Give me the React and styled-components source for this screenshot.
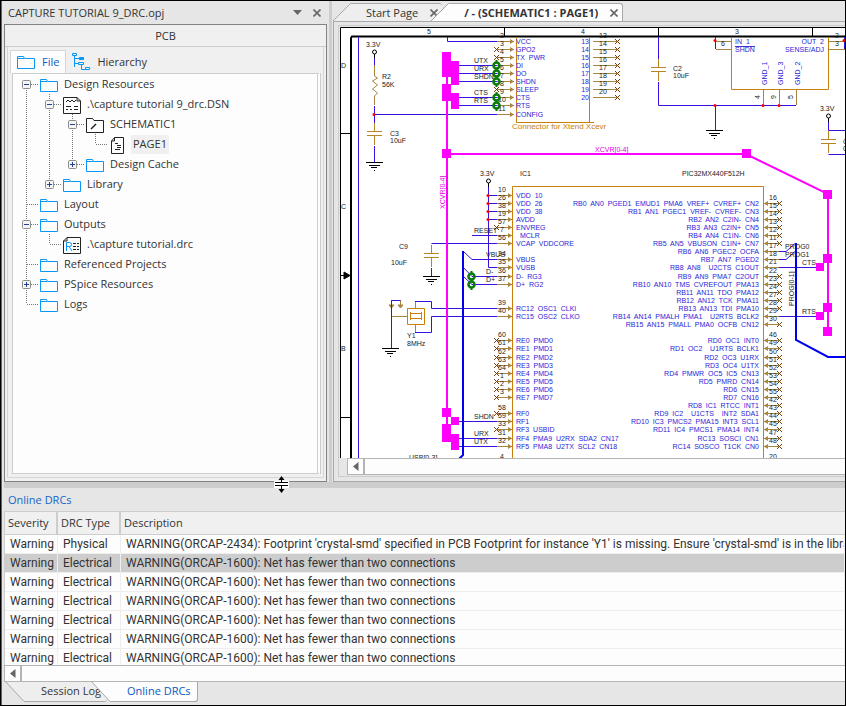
import React from 'react'
import styled, { createGlobalStyle } from 'styled-components';


const GlobalStyle = createGlobalStyle`
    * {
        box-sizing: border-box;
    }
    body {
        margin: 0;
        font-family: "Open Sans", "Noto Sans", sans-serif;
        font-size: 11px;
        line-height: 18px;
        color: #333;
    }
    button {
        font: inherit;
        color: inherit;
        background: none;
        border: 0;
        padding: 0;
        display: flex;
        align-items: center;
        justify-content: center;
    }
    svg {
        display: block;
        flex: none;
    }
`;

const Window = styled.div`
    height: 100vh;
    display: flex;
    flex-direction: column;
    background-color: #e6e6e6;
    border: 1px solid #000;
    padding-left: 3px;
    box-shadow: inset 1px 0 0 #2a6fd0;
    overflow: hidden;
`;

const Workspace = styled.div`
    flex: 1;
    min-height: 0;
    display: flex;
`;

const SplitterV = styled.div`
    width: 6px;
    background-color: #cdcdcd;
    border-left: 2px solid #e6e6e6;
    border-right: 1px solid #e6e6e6;
`;

const SplitterH = styled.div`
    position: relative;
    height: 6px;
    flex: none;
    background-color: #cdcdcd;
`;

const ResizeCursor = styled.svg`
    position: absolute;
    left: 270px;
    top: -6px;
    z-index: 2;
`;

const ProjectPanel = styled.section`
    width: 323px;
    display: flex;
    flex-direction: column;
`;

const PanelHeader = styled.header`
    height: 23px;
    display: flex;
    align-items: center;
    padding: 0 2px 0 4px;
    gap: 4px;
    h1 {
        flex: 1;
        margin: 0;
        font-size: 11px;
        font-weight: normal;
    }
    button {
        width: 16px;
        height: 16px;
    }
`;

const PanelBody = styled.div`
    flex: 1;
    min-height: 0;
    display: flex;
    flex-direction: column;
    border: 1px solid #828282;
    background-color: #f0f0f0;
`;

const PanelTitle = styled.div`
    height: 22px;
    line-height: 22px;
    text-align: center;
    border-bottom: 1px solid #cdcdcd;
`;

const TreeFrame = styled.div`
    flex: 1;
    min-height: 0;
    display: flex;
    flex-direction: column;
    margin: 0 2px 3px 2px;
    padding: 3px 2px 3px 2px;
    border: 1px solid #d6d6d6;
    border-top: 0;
`;

const ViewTabs = styled.div`
    display: flex;
    height: 23px;
`;

const ViewTab = styled.button`
    gap: 7px;
    padding: 0 6px;
    color: ${(props) => (props.$active ? '#0a5ac2' : '#333')};
    background-color: ${(props) => (props.$active ? '#fdfdfd' : 'transparent')};
    border: ${(props) => (props.$active ? '1px solid #d6d6d6' : '0')};
    border-bottom: 0;
`;

const Tree = styled.div`
    flex: 1;
    min-height: 0;
    overflow: hidden;
    padding-left: 2px;
    margin-left: 2px;
    background-color: #fdfdfd;
    border: 1px solid #cdcdcd;
    border-right: 4px double #cdcdcd;
`;

const TreeRow = styled.div`
    display: flex;
    align-items: center;
    height: 20px;
    .icon {
        margin: 2px 4px 0 2px;
    }
`;

const TreeLabel = styled.span`
    padding: 0 2px 1px 2px;
    line-height: 18px;
    background-color: ${(props) => (props.$selected ? '#f0f0f0' : 'transparent')};
`;

const Editor = styled.section`
    flex: 1;
    min-width: 0;
    display: flex;
    flex-direction: column;
`;

const DocTabs = styled.div`
    display: flex;
    height: 20px;
    padding-top: 2px;
`;

const DocTab = styled.div`
    display: flex;
    height: 18px;
    margin-left: ${(props) => (props.$active ? '-11px' : '0')};
    font-weight: ${(props) => (props.$active ? 'bold' : 'normal')};
    .body {
        display: flex;
        align-items: center;
        gap: 12px;
        padding: 0 4px 0 15px;
        border-top: 1px solid #a8a8a8;
        border-right: ${(props) => (props.$active ? '1px solid #a8a8a8' : '0')};
        border-radius: 0 3px 0 0;
        background-color: ${(props) => (props.$active ? '#fdfdfd' : '#eee')};
    }
`;

const EditorFrame = styled.div`
    flex: 1;
    min-height: 0;
    display: flex;
    padding: 3px 0 4px 4px;
    border: 1px solid #a8a8a8;
    border-right: 0;
`;

const EditorView = styled.div`
    flex: 1;
    min-width: 0;
    display: flex;
    flex-direction: column;
    padding: 1px 0 1px 1px;
    border: 1px solid #cdcdcd;
    border-right: 0;
`;

const Sheet = styled.svg`
    flex: 1;
    min-height: 0;
    width: 100%;
    background-color: #fff;
    fill: none;
    text {
        font-family: "Liberation Sans", Arial, sans-serif;
        font-size: 7px;
        white-space: pre;
        fill: #222;
    }
    .pin {
        fill: #2a24d8;
    }
    .net {
        fill: #e600e6;
    }
    .caption {
        font-size: 8px;
        fill: #c8800a;
    }
    .end {
        text-anchor: end;
    }
    .mid {
        text-anchor: middle;
    }
`;

const ScrollBar = styled.div`
    display: flex;
    height: 17px;
    flex: none;
    margin-left: ${(props) => (props.$inset ? '7px' : '0')};
    background-color: #fdfdfd;
    border: 1px solid #b4b4b4;
    border-right: 0;
    button {
        width: 17px;
        border-right: 2px solid #b4b4b4;
    }
`;

const Dock = styled.section`
    flex: none;
    h2 {
        margin: 0;
        padding: 0 4px;
        font-size: 11px;
        font-weight: normal;
        line-height: 23px;
        color: #1565c8;
    }
`;

const TableView = styled.div`
    height: 154px;
    overflow: hidden;
    background-color: #fdfdfd;
    border-left: 1px solid #cdcdcd;
`;

const DrcTable = styled.table`
    width: 100%;
    table-layout: fixed;
    border-collapse: separate;
    border-spacing: 0;
    white-space: nowrap;
    th {
        height: 24px;
        padding: 0 3px;
        text-align: left;
        font-weight: normal;
        background-color: #f0f0f0;
        border-top: 1px solid #cdcdcd;
        border-bottom: 1px solid #cdcdcd;
        border-right: 2px solid #cdcdcd;
    }
    th:last-child {
        border-right: 0;
    }
    td {
        height: 19px;
        padding: 1px 5px 0 5px;
        font-family: Roboto, "Open Sans", sans-serif;
        font-size: 12px;
        line-height: 17px;
        overflow: hidden;
        border-bottom: 1px solid #eee;
        border-right: 1px solid #eee;
    }
    .severity {
        width: 53px;
    }
    .type {
        width: 63px;
    }
`;

const DrcRow = styled.tr`
    background-color: ${(props) => (props.$selected ? '#cdcdcd' : 'transparent')};
`;

const DockTabs = styled.div`
    display: flex;
    height: 23px;
    padding-left: 1px;
`;

const DockTab = styled.button`
    height: 20px;
    margin-left: ${(props) => (props.$active ? '-16px' : '0')};
    color: ${(props) => (props.$active ? '#0a5ac2' : '#333')};
    span {
        height: 20px;
        padding: 0 6px 0 16px;
        border-bottom: 1px solid #a8a8a8;
        border-right: ${(props) => (props.$active ? '1px solid #a8a8a8' : '0')};
        border-radius: 0 0 3px 0;
        background-color: ${(props) => (props.$active ? '#fdfdfd' : '#eee')};
    }
`;

const Folder = () => (
    <svg className="icon" width="18" height="14" fill="none" stroke="#0a96f5">
        <path d="M.5 1.5H6.5L7.5 3.5H17.5V13.5H.5ZM.5 3.5H7" />
    </svg>
)

const icons = {
    folder: <Folder />,
    design: (
        <svg className="icon" width="18" height="17" fill="none" stroke="#222">
            <path d="M.5 .5H14L17.5 4V16.5H.5ZM14 .5V4H17.5" />
            <path d="M3 5l2-2 2 2 2-2 2 2 2-2M3 9.5h5M11 9.5h4M3 12.5h2M7 12.5h2M11 12.5h4" />
        </svg>
    ),
    schematic: (
        <svg className="icon" width="18" height="15" fill="none" stroke="#222">
            <path d="M.5 .5H6.5L8 2.5H17.5V14.5H.5Z" />
            <path d="M5 11l5-5" strokeWidth="1.4" />
        </svg>
    ),
    page: (
        <svg className="icon" width="18" height="17" fill="none" stroke="#222">
            <path d="M5.5 .5H14.5V16.5H2.5V4Z M5.5 .5V4H2.5" />
            <path d="M6 6.5h3M8 8.5h4M8 10.5h4M6 12.5h5" />
        </svg>
    ),
    report: (
        <svg className="icon" width="18" height="17" fill="none" stroke="#222">
            <path d="M4 .5H17.5V16.5H.5V4ZM4 .5V4H.5" />
            <path d="M10 6.5h6M10 9.5h6M10 12.5h6" strokeDasharray="3 1" />
            <path d="M3.5 14V5.5H6.5Q8.5 5.5 8.5 7.5T6.5 9.5H3.5M6 9.5L9 14" stroke="#0a96f5" />
        </svg>
    ),
}

const HierarchyIcon = () => (
    <svg width="18" height="19" fill="none" stroke="#0a96f5">
        <path d="M.5 1.5h4v2h-4zM2.5 4V15M2.5 6.5h5M2.5 11.5h4M9.5 13V17.5h4" />
        <path d="M7.5 5.5h4v2h-4zM6.5 10.5h5v2h-5zM13.5 15.5h4v2h-4z" />
        <path d="M7 6.5h5" strokeWidth="2" />
    </svg>
)

const Cross = ({ size = 8 }) => (
    <svg width={size} height={size} viewBox="0 0 8 8" stroke="#666" strokeWidth="1.6">
        <path d="M.5 .5l7 7M7.5 .5l-7 7" />
    </svg>
)

const LeftTriangle = () => (
    <svg width="6" height="9" fill="#666"><path d="M5.5 0V9L0 4.5Z" /></svg>
)

// cells: one letter per indent column
// '|' line, 't' branch, 'l' last branch, '^' first open box
// '-' open box, '+' closed box, '*' closed box that ends its column
const treeItems = [
    { cells: '^', icon: 'folder', label: 'Design Resources' },
    { cells: '|-', icon: 'design', label: '.\\capture tutorial 9_drc.DSN' },
    { cells: '||-', icon: 'schematic', label: 'SCHEMATIC1' },
    { cells: '|||l', icon: 'page', label: 'PAGE1', selected: true },
    { cells: '||*', icon: 'folder', label: 'Design Cache' },
    { cells: '|*', icon: 'folder', label: 'Library' },
    { cells: 't', icon: 'folder', label: 'Layout' },
    { cells: '-', icon: 'folder', label: 'Outputs' },
    { cells: '|l', icon: 'report', label: '.\\capture tutorial.drc' },
    { cells: 't', icon: 'folder', label: 'Referenced Projects' },
    { cells: '+', icon: 'folder', label: 'PSpice Resources' },
    { cells: 'l', icon: 'folder', label: 'Logs' },
]

const TreeCell = ({ kind, label }) => {
    const up = kind !== '^';
    const down = '|t-+^'.includes(kind);
    const across = kind !== '|';
    const box = '-+*^'.includes(kind);
    const closed = kind === '+' || kind === '*';
    const drawing = (
        <svg width="23" height="20" overflow="visible" fill="none" stroke="#777">
            <path
                strokeDasharray="1 1"
                d={`${up ? 'M11.5 0V10' : ''}${down ? 'M11.5 10V20' : ''}${across ? 'M12 10.5H24' : ''}`}
            />
            {box && <rect x="7.5" y="6.5" width="8" height="8" rx="1" fill="#f4f4f4" stroke="#8c8c8c" />}
            {box && <path d={`M9 10.5h5${closed ? 'M11.5 8v5' : ''}`} stroke="#24408e" />}
        </svg>
    )
    return box ? <button type="button" aria-label={`Toggle ${label}`}>{drawing}</button> : drawing
}

const leftPins = [
    [195, '10', 'VDD  10'], [203, '26', 'VDD  26'], [211, '38', 'VDD  38'], [219, '19', 'AVDD'],
    [227, '57', 'ENVREG', 'x'], [235, '7', '  MCLR'], [243, '56', 'VCAP  VDDCORE'],
    [259, '34', 'VBUS'], [267, '35', 'VUSB'], [276, '36', 'D-  RG3'], [284, '37', 'D+  RG2'],
    [308, '39', 'RC12  OSC1  CLKI'], [316, '40', 'RC15  OSC2  CLKO'],
    [340, '60', 'RE0  PMD0', 'x'], [348, '61', 'RE1  PMD1', 'x'], [357, '62', 'RE2  PMD2', 'x'],
    [365, '63', 'RE3  PMD3', 'x'], [373, '64', 'RE4  PMD4', 'x'], [381, '1', 'RE5  PMD5', 'x'],
    [389, '2', 'RE6  PMD6', 'x'], [397, '3', 'RE7  PMD7', 'x'],
    [413, '58', 'RF0', 'x'], [421, '59', 'RF1'], [429, '33', 'RF3  USBID', 'x'],
    [438, '31', 'RF4  PMA9  U2RX  SDA2  CN17'], [446, '32', 'RF5  PMA8  U2TX  SCL2  CN18'],
    [462, '4', ''],
]

const rightPins = [
    [203, '16', 'RB0  AN0  PGED1  EMUD1  PMA6  VREF+  CVREF+  CN2', 'x'],
    [211, '15', 'RB1  AN1  PGEC1  VREF-  CVREF-  CN3', 'x'],
    [219, '14', 'RB2  AN2  C2IN-  CN4', 'x'],
    [227, '13', 'RB3  AN3  C2IN+  CN5', 'x'],
    [235, '12', 'RB4  AN4  C1IN-  CN6', 'x'],
    [243, '11', 'RB5  AN5  VBUSON  C1IN+  CN7', 'x'],
    [251, '17', 'RB6  AN6  PGEC2  OCFA'],
    [259, '18', 'RB7  AN7  PGED2'],
    [267, '21', 'RB8  AN8    U2CTS  C1OUT'],
    [276, '22', 'RB9  AN9  PMA7  C2OUT', 'x'],
    [284, '23', 'RB10  AN10  TMS  CVREFOUT  PMA13', 'x'],
    [292, '24', 'RB11  AN11  TDO  PMA12', 'x'],
    [300, '27', 'RB12  AN12  TCK  PMA11', 'x'],
    [308, '28', 'RB13  AN13  TDI  PMA10', 'x'],
    [316, '29', 'RB14  AN14  PMALH  PMA1    U2RTS  BCLK2'],
    [324, '30', 'RB15  AN15  PMALL  PMA0  OCFB  CN12', 'x'],
    [340, '46', 'RD0  OC1  INT0', 'x'],
    [348, '49', 'RD1  OC2    U1RTS  BCLK1', 'x'],
    [357, '50', 'RD2  OC3  U1RX', 'x'],
    [365, '51', 'RD3  OC4  U1TX', 'x'],
    [373, '52', 'RD4  PMWR  OC5  IC5  CN13', 'x'],
    [381, '53', 'RD5  PMRD  CN14', 'x'],
    [389, '54', 'RD6  CN15', 'x'],
    [397, '55', 'RD7  CN16', 'x'],
    [405, '42', 'RD8  IC1  RTCC  INT1', 'x'],
    [413, '43', 'RD9  IC2    U1CTS    INT2  SDA1', 'x'],
    [421, '44', 'RD10  IC3  PMCS2  PMA15  INT3  SCL1', 'x'],
    [429, '45', 'RD11  IC4  PMCS1  PMA14  INT4', 'x'],
    [438, '47', 'RC13  SOSCI  CN1', 'x'],
    [446, '48', 'RC14  SOSCO  T1CK  CN0', 'x'],
    [462, '20', ''],
]

const radioPins = [
    [41, '2', 'VCC'], [49, '3', 'GPO2', 'x'], [57, '4', 'TX  PWR', 'x'], [65, '5', 'DI'], [73, '6', 'DO'],
    [81, '7', 'SHDN'], [89, '8', 'SLEEP', 'x'], [97, '9', 'CTS'], [105, '10', 'RTS'], [114, '11', 'CONFIG'],
]

const netLabels = [
    [474, 63, 'UTX'], [474, 71, 'URX'], [474, 79, 'SHDN'], [474, 95, 'CTS'], [474, 103, 'RTS'],
    [474, 233, 'RESET'], [486, 257, 'VBUS'], [486, 274, 'D-'], [486, 282, 'D+'],
    [474, 419, 'SHDN'], [474, 436, 'URX'], [474, 444, 'UTX'],
    [785, 249, 'PROG0'], [785, 257, 'PROG1'], [802, 265, 'CTS'], [802, 314, 'RTS'],
    [366, 47, '3.3V'], [382, 79, 'R2'], [382, 87, '56K'], [390, 136, 'C3'], [390, 143, '10uF'],
    [673, 71, 'C2'], [673, 78, '10uF'], [820, 111, '3.3V'], [843, 144, 'C'], [843, 151, '0'],
    [480, 176, '3.3V'], [520, 176, 'IC1'], [682, 176, 'PIC32MX440F512H'],
    [399, 249, 'C9'], [391, 265, '10uF'], [407, 338, 'Y1'], [407, 346, '8MHz'], [409, 460, 'USB[0-3]'],
    [427, 34, '5'], [581, 34, '4'], [735, 34, '3'], [341, 68, 'D'], [341, 209, 'C'], [341, 351, 'B'],
    [721, 46, '6'], [835, 38, '2'], [835, 46, '3'],
]

const buses = [
    [442, 52, 9, 25], [451, 61, 8, 24], [442, 84, 9, 17], [451, 93, 8, 16], [442, 149, 9, 9],
    [442, 408, 9, 9], [451, 417, 8, 8], [442, 424, 9, 18], [451, 434, 8, 16],
    [742, 149, 9, 9], [823, 190, 9, 9], [823, 254, 9, 9], [816, 263, 8, 8],
    [823, 303, 9, 9], [816, 312, 8, 8], [823, 327, 9, 9],
]

const junctions = [
    [374, 114], [488, 195], [488, 203], [488, 211], [488, 219],
    [715, 40], [715, 105], [763, 105], [779, 105], [844, 40],
]

const NoConnect = ({ x, y }) => <path d={`M${x - 2} ${y - 2}l5 5m0 -5l-5 5`} stroke="#7a4008" />

const LeftPin = ({ x, y, num, name, nc }) => (
    <g>
        <path d={`M497 ${y}.5H${x}`} stroke="#a88440" />
        <path d={`M${x - 4} ${y - 2}l4 2.5l-4 2.5z`} fill="#a88440" />
        {nc && <NoConnect x={496} y={y} />}
        <text className="mid" x="502" y={y - 3}>{num}</text>
        <text className="pin" x="516" y={y + 3}>{name}</text>
    </g>
)

const RightPin = ({ y, num, name, nc }) => (
    <g>
        <path d={`M764 ${y}.5H779`} stroke="#a88440" />
        <path d={`M768 ${y - 2}l-4 2.5l4 2.5z`} fill="#a88440" />
        {nc && <NoConnect x={779} y={y} />}
        <text className="mid" x="773" y={y - 3}>{num}</text>
        <text className="pin end" x="759" y={y + 3}>{name}</text>
    </g>
)

const Ground = ({ x, y }) => (
    <path d={`M${x - 8} ${y}.5h17M${x - 5} ${y + 3}.5h11M${x - 3} ${y + 5}.5h6M${x} ${y + 8}.5h1`} stroke="#000" />
)

const Capacitor = ({ x, y }) => (
    <path
        d={`M${x}.5 ${y - 8}V${y}M${x - 7} ${y}.5h15M${x - 7} ${y + 4}.5h15M${x}.5 ${y + 4}V${y + 14}`}
        stroke="#b8842a"
    />
)

const GreenMark = ({ x, y }) => (
    <g stroke="#0a7d0a">
        <circle cx={x + 0.5} cy={y + 0.5} r="3" strokeWidth="2.6" />
        <path d={`M${x}.5 ${y - 5}v3M${x}.5 ${y + 3}v3`} strokeWidth="2" />
    </g>
)

const Schematic = () => (
    <Sheet role="img" aria-label="Schematic page 1">
        {/* sheet coordinates start at 340,27 */}
        <g transform="translate(-340 -27)">
            <g stroke="#000">
                <path d="M340.5 458V27.5H1600M504.5 27V37M658.5 27V37M812.5 27V37M340 133.5H350M340 417.5H350M340 275.5H346" />
                <path d="M351 458V38L352 36.5H1600" strokeWidth="2" />
                <path d="M344 272l6 3.5l-6 3.5z" fill="#000" />
            </g>

            {/* component bodies */}
            <g stroke="#c8800a">
                <path d="M516.5 37V122.5H594M589.5 37V122" />
                <path d="M731.5 37V89.5H828.5V37" />
                <path d="M512.5 458V186.5H763.5V458" />
                <path d="M407.5 308.5h17v16h-17zM410.5 313.5h11v5h-11z" />
                <path d="M410.5 312v8M421.5 312v8" />
            </g>
            <g stroke="#a88440">
                <path d="M374.5 65V76l3 2l-5 3l5 4l-5 4l5 4l-3 3V105" />
                <path d="M716 41.5H731M716 49.5H731M828 41.5H845M828 49.5H845" />
                <path d="M763.5 90V105M779.5 90V105M796.5 90V105" />
                <path d="M391 316.5H407M415.5 308V301M415.5 325V332M391.5 300v6M400.5 300v6" />
                <path d="M389 305l2.5 3l2.5 -3zM398 305l2.5 3l2.5 -3z" fill="#a88440" />
            </g>

            {/* wires */}
            <g stroke="#3a10e0">
                <path d="M358.5 37V458M374.5 54V65M374.5 106V123M374.5 146V162M374 114.5H497" />
                <path d="M447.5 37V41.5H497M454 65.5H497M454 73.5H497M454 81.5H497M454 97.5H497M454 105.5H497" />
                <path d="M658.5 37V59M658.5 82V105.5H796M715.5 105V130M715.5 37V49M844.5 37V49" />
                <path d="M828.5 122V130.5H1600M828.5 154.5H1600" />
                <path d="M488.5 187V267.5H497M488 195.5h9M488 203.5h9M488 211.5h9M488 219.5h9M472 235.5H497" />
                <path d="M497 243.5H431.5M431.5 268V276M463 251l9 8.5H497M463 267l9 9.5H497M463 276l9 8.5H497" />
                <path d="M391.5 348V300.5H400.5M415 301.5H431.5V308.5H497M415 332.5H431.5V316.5H497" />
                <path d="M454 421.5H497M454 438.5H497M454 446.5H497" />
                <path d="M779 251.5h7l9 -8M779 259.5h7l9 -8M779 267.5H820M779 316.5H820" />
            </g>
            <g stroke="#0000f0" strokeWidth="2">
                <path d="M463 251V455l-4 4M796 243V340L828 357H1600" />
            </g>
            <g stroke="#f0f" strokeWidth="2">
                <path d="M447 52V440M447 154H746L828 194V331" />
            </g>
            {buses.map(([x, y, w, h]) => (
                <rect key={`${x}-${y}`} x={x} y={y} width={w} height={h} fill="#f0f" />
            ))}

            <Capacitor x={374} y={131} />
            <Capacitor x={658} y={67} />
            <Capacitor x={828} y={139} />
            <Capacitor x={431} y={253} />
            <Ground x={374} y={162} />
            <Ground x={714} y={130} />
            <Ground x={431} y={276} />
            <Ground x={390} y={348} />

            {/* power symbols */}
            {[[374, 52], [828, 116], [488, 181]].map(([x, y]) => (
                <g key={x} stroke="#000">
                    <circle cx={x + 0.5} cy={y} r="2" />
                    <path d={`M${x}.5 ${y + 2}v4`} />
                </g>
            ))}

            {radioPins.map(([y, num, name, nc]) => (
                <LeftPin key={y} x={514} y={y} num={num} name={name} nc={nc} />
            ))}
            {leftPins.map(([y, num, name, nc]) => (
                <LeftPin key={y} x={512} y={y} num={num} name={name} nc={nc} />
            ))}
            {rightPins.map(([y, num, name, nc]) => (
                <RightPin key={y} y={y} num={num} name={name} nc={nc} />
            ))}
            {[13, 14, 15, 16, 17, 18, 19, 20].map((num, i) => (
                <g key={num}>
                    <path d={`M593 ${41 + i * 8}.5H617`} stroke="#a88440" />
                    <NoConnect x={617} y={41 + i * 8} />
                    <text className="pin end" x="589" y={44 + i * 8}>{num}</text>
                    <text className="mid" x="603" y={38 + i * 8}>{num}</text>
                </g>
            ))}

            {[65, 73, 81, 97, 105].map((y) => <GreenMark key={y} x={496} y={y} />)}
            {[276, 284].map((y) => <GreenMark key={y} x={471} y={y} />)}
            {junctions.map(([x, y]) => (
                <circle key={`${x}-${y}`} cx={x} cy={y + 0.5} r="1.5" fill="#f00" />
            ))}

            {netLabels.map(([x, y, label]) => (
                <text key={`${x}-${y}`} x={x} y={y}>{label}</text>
            ))}
            <text className="pin" x="735" y="44">IN  1</text>
            <text className="pin" x="735" y="52">SHDN</text>
            <path d="M735 46.5H755" stroke="#3a34d0" />
            <text className="pin end" x="824" y="44">OUT  2</text>
            <text className="pin end" x="824" y="52">SENSE/ADJ</text>
            <text className="pin" transform="translate(767 85) rotate(-90)">GND_1</text>
            <text className="pin" transform="translate(783 85) rotate(-90)">GND_3</text>
            <text className="pin" transform="translate(800 85) rotate(-90)">GND_2</text>
            <text transform="translate(760 99) rotate(-90)">4</text>
            <text transform="translate(776 99) rotate(-90)">9</text>
            <text transform="translate(793 99) rotate(-90)">5</text>
            <text className="caption" x="512" y="129">Connector for Xtend Xcevr</text>
            <text className="net" x="595" y="152">XCVR[0-4]</text>
            <text className="net" transform="translate(445 209) rotate(-90)">XCVR[0-4]</text>
            <text transform="translate(794 306) rotate(-90)">PROG[0-1]</text>
        </g>
    </Sheet>
)

const fewer = 'WARNING(ORCAP-1600): Net has fewer than two connections';

const drcs = [
    { type: 'Physical', text: "WARNING(ORCAP-2434): Footprint 'crystal-smd' specified in PCB Footprint for instance 'Y1' is missing. Ensure 'crystal-smd' is in the library" },
    { type: 'Electrical', text: fewer, selected: true },
    { type: 'Electrical', text: fewer },
    { type: 'Electrical', text: fewer },
    { type: 'Electrical', text: fewer },
    { type: 'Electrical', text: fewer },
    { type: 'Electrical', text: fewer },
]

const ProjectManager = () => (
    <ProjectPanel>
        <PanelHeader>
            <h1>CAPTURE TUTORIAL 9_DRC.opj</h1>
            <button type="button" aria-label="Panel menu">
                <svg width="9" height="5" fill="#666"><path d="M0 0H9L4.5 5Z" /></svg>
            </button>
            <button type="button" aria-label="Close panel"><Cross /></button>
        </PanelHeader>
        <PanelBody>
            <PanelTitle>PCB</PanelTitle>
            <TreeFrame>
                <ViewTabs>
                    <ViewTab type="button" $active><Folder />File</ViewTab>
                    <ViewTab type="button"><HierarchyIcon />Hierarchy</ViewTab>
                </ViewTabs>
                <Tree>
                    {treeItems.map((item) => (
                        <TreeRow key={item.label}>
                            {item.cells.split('').map((kind, index) => (
                                <TreeCell key={index} kind={kind} label={item.label} />
                            ))}
                            {icons[item.icon]}
                            <TreeLabel $selected={item.selected}>{item.label}</TreeLabel>
                        </TreeRow>
                    ))}
                </Tree>
            </TreeFrame>
        </PanelBody>
    </ProjectPanel>
)

const TabSlope = ({ fill }) => (
    <svg width="18" height="18" fill={fill} stroke="#a8a8a8">
        <path d="M0 18L17.5 .5H19V19" />
    </svg>
)

const DockSlope = ({ fill }) => (
    <svg width="20" height="20" fill={fill} stroke="#a8a8a8">
        <path d="M0 -1L19 19.5H21V-1" />
    </svg>
)

const App = () => {
    return (
        <>
            <GlobalStyle />
            <Window>
                <Workspace>
                    <ProjectManager />
                    <SplitterV />
                    <Editor>
                        <DocTabs>
                            <DocTab>
                                <TabSlope fill="#eee" />
                                <div className="body">
                                    <span>Start Page</span>
                                    <button type="button" aria-label="Close Start Page"><Cross /></button>
                                </div>
                            </DocTab>
                            <DocTab $active>
                                <TabSlope fill="#fdfdfd" />
                                <div className="body">
                                    <span>/ - (SCHEMATIC1 : PAGE1)</span>
                                    <button type="button" aria-label="Close PAGE1"><Cross /></button>
                                </div>
                            </DocTab>
                        </DocTabs>
                        <EditorFrame>
                            <EditorView>
                                <Schematic />
                                <ScrollBar $inset>
                                    <button type="button" aria-label="Scroll left"><LeftTriangle /></button>
                                </ScrollBar>
                            </EditorView>
                        </EditorFrame>
                    </Editor>
                </Workspace>
                <SplitterH>
                    <ResizeCursor width="15" height="17">
                        <path d="M0 5H15V12H0Z" fill="#fff" />
                        <path d="M1 6.5H14M1 9.5H14M7.5 1V6M7.5 10V16" stroke="#000" />
                        <path d="M7.5 0L10.5 4H4.5ZM7.5 17L10.5 13H4.5Z" />
                    </ResizeCursor>
                </SplitterH>
                <Dock>
                    <h2>Online DRCs</h2>
                    <TableView>
                        <DrcTable>
                            <thead>
                                <tr>
                                    <th className="severity">Severity</th>
                                    <th className="type">DRC Type</th>
                                    <th>Description</th>
                                </tr>
                            </thead>
                            <tbody>
                                {drcs.map((drc, index) => (
                                    <DrcRow key={index} $selected={drc.selected}>
                                        <td>Warning</td>
                                        <td>{drc.type}</td>
                                        <td>{drc.text}</td>
                                    </DrcRow>
                                ))}
                            </tbody>
                        </DrcTable>
                    </TableView>
                    <ScrollBar>
                        <button type="button" aria-label="Scroll left"><LeftTriangle /></button>
                    </ScrollBar>
                    <DockTabs>
                        <DockTab type="button">
                            <DockSlope fill="#eee" />
                            <span>Session Log</span>
                        </DockTab>
                        <DockTab type="button" $active>
                            <DockSlope fill="#fdfdfd" />
                            <span>Online DRCs</span>
                        </DockTab>
                    </DockTabs>
                </Dock>
            </Window>
        </>
    )
}

export default App
